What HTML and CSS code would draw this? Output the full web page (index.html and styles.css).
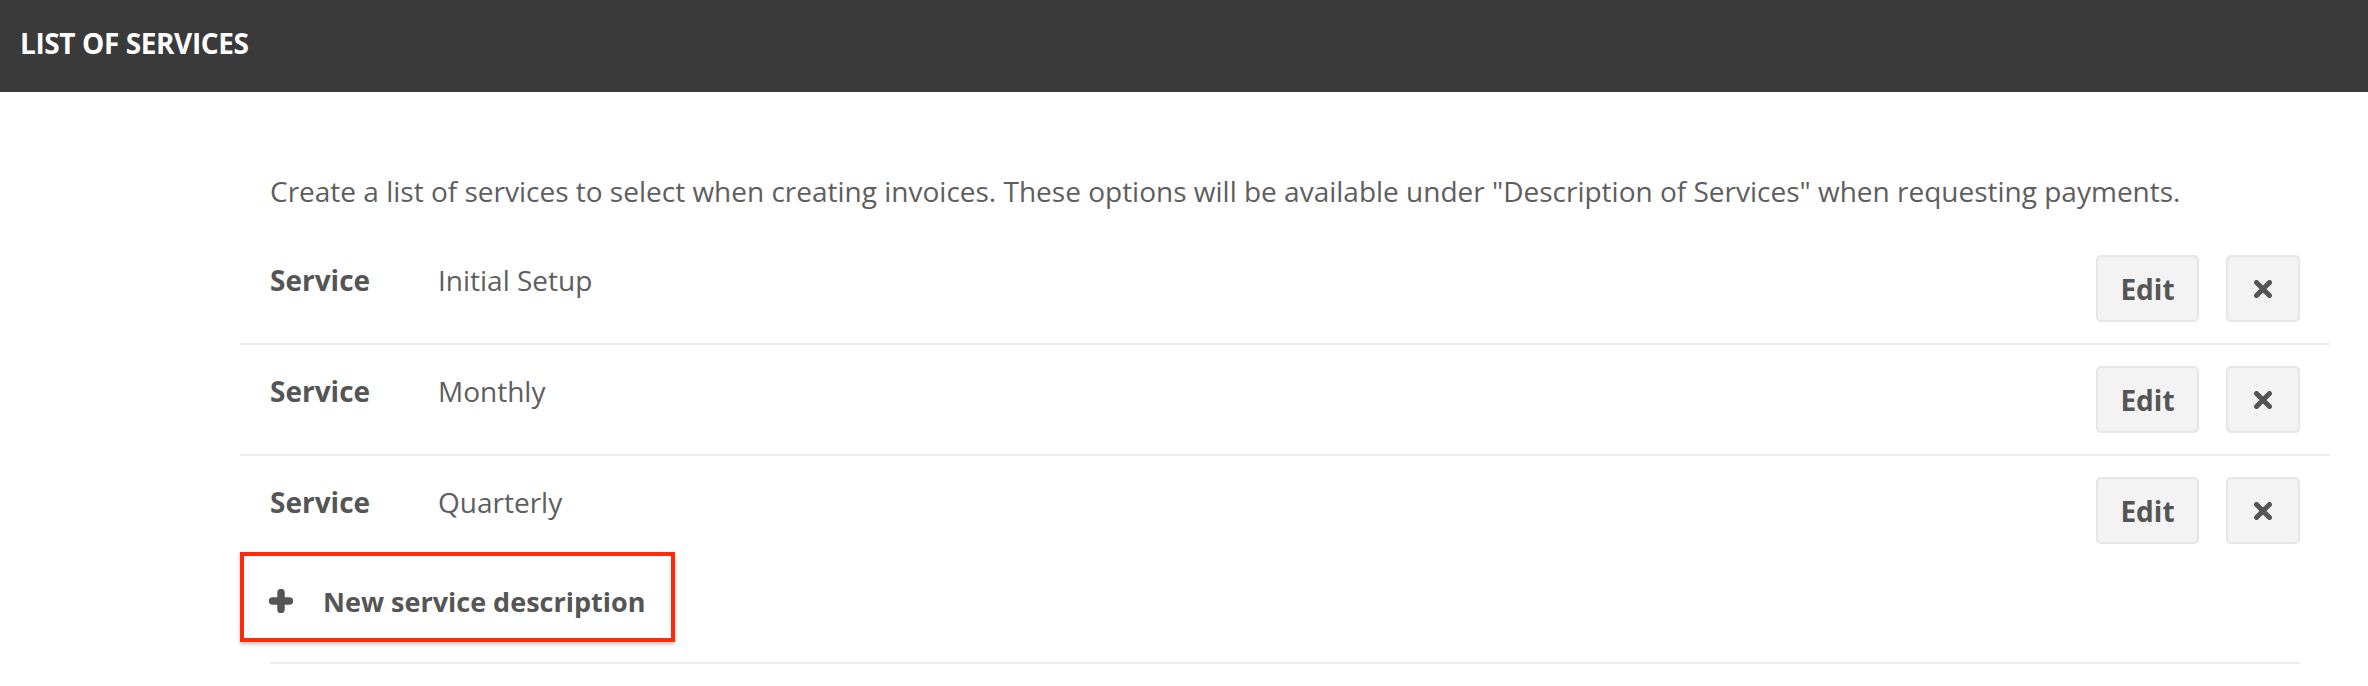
FILE: index.html
```html
<!DOCTYPE html>
<html lang="en">
<head>
<meta charset="utf-8">
<title>List of services</title>
<link rel="stylesheet" href="styles.css">
</head>
<body>
<header class="topbar">
  <h1 class="topbar-title">LIST OF SERVICES</h1>
</header>
<main class="content">
  <p class="intro">Create a list of services to select when creating invoices. These options will be available under "Description of Services" when requesting payments.</p>
  <ul class="service-list">
    <li class="service-row">
      <span class="service-label">Service</span>
      <span class="service-value">Initial Setup</span>
      <div class="service-actions">
        <button class="btn btn-edit" type="button">Edit</button>
        <button class="btn btn-remove" type="button" aria-label="Remove"><svg class="icon-x" viewBox="0 0 20 18" width="20" height="18"><path d="M3.5 2.5 L16.5 15.5 M16.5 2.5 L3.5 15.5" stroke="#555" stroke-width="5" stroke-linecap="round"/></svg></button>
      </div>
    </li>
    <li class="service-row">
      <span class="service-label">Service</span>
      <span class="service-value">Monthly</span>
      <div class="service-actions">
        <button class="btn btn-edit" type="button">Edit</button>
        <button class="btn btn-remove" type="button" aria-label="Remove"><svg class="icon-x" viewBox="0 0 20 18" width="20" height="18"><path d="M3.5 2.5 L16.5 15.5 M16.5 2.5 L3.5 15.5" stroke="#555" stroke-width="5" stroke-linecap="round"/></svg></button>
      </div>
    </li>
    <li class="service-row">
      <span class="service-label">Service</span>
      <span class="service-value">Quarterly</span>
      <div class="service-actions">
        <button class="btn btn-edit" type="button">Edit</button>
        <button class="btn btn-remove" type="button" aria-label="Remove"><svg class="icon-x" viewBox="0 0 20 18" width="20" height="18"><path d="M3.5 2.5 L16.5 15.5 M16.5 2.5 L3.5 15.5" stroke="#555" stroke-width="5" stroke-linecap="round"/></svg></button>
      </div>
    </li>
  </ul>
  <div class="add-wrap">
    <a class="add-link" href="#"><svg class="icon-plus" viewBox="0 0 24 24" width="24" height="24"><path d="M12 3.5 V20.5 M3.5 12 H20.5" stroke="#555" stroke-width="7.5" stroke-linecap="round"/></svg><span>New service description</span></a>
  </div>
  <div class="divider"></div>
</main>
</body>
</html>
```
FILE: styles.css
```css
* { box-sizing: border-box; }
html, body { margin: 0; padding: 0; background: #fff; }
body {
  font-family: "Open Sans", "Liberation Sans", sans-serif;
  color: #5c5c5c;
}
.topbar {
  height: 92px;
  background: #3a3a3a;
  display: flex;
  align-items: center;
  padding-left: 20px;
}
.topbar-title {
  margin: 0;
  padding-bottom: 6px;
  font-size: 28px;
  font-weight: 700;
  color: #fff;
  letter-spacing: -0.4px;
}
.content {
  margin-left: 240px;
  width: 2090px;
}
.intro {
  margin: 77px 0 0;
  padding: 0 30px;
  font-size: 28px;
  line-height: 45px;
  color: #5e5e5e;
}
.service-list {
  list-style: none;
  margin: 20px 0 0;
  padding: 0;
}
.service-row {
  display: flex;
  align-items: flex-start;
  padding: 21px 30px;
  border-bottom: 2px solid #ececec;
}
.service-row:last-child {
  border-bottom: none;
  padding-bottom: 8px;
}
.service-label {
  width: 168px;
  flex: none;
  padding-top: 3px;
  font-size: 28px;
  line-height: 45px;
  font-weight: 700;
  color: #555;
}
.service-value {
  flex: 1;
  padding-top: 3px;
  font-size: 28px;
  line-height: 45px;
  color: #5e5e5e;
}
.service-actions {
  display: flex;
  gap: 27px;
}
.btn {
  height: 67px;
  background: #f3f3f3;
  border: 2px solid #e6e6e6;
  border-radius: 5px;
  font-family: inherit;
  font-size: 28px;
  font-weight: 700;
  color: #555;
  padding: 0;
  display: flex;
  align-items: center;
  justify-content: center;
}
.btn-edit { width: 103px; }
.btn-remove { width: 74px; }
.icon-x { display: block; }
.add-wrap {
  display: flex;
}
.add-link {
  display: flex;
  align-items: center;
  gap: 30px;
  height: 90px;
  padding: 8px 26px 0 25px;
  border: 4px solid #ff2a0a;
  box-shadow: 0 2px 4px rgba(0,0,0,0.25);
  text-decoration: none;
  font-size: 27px;
  font-weight: 700;
  color: #555;
}
.icon-plus { display: block; flex: none; }
.divider {
  margin: 20px 30px 0;
  height: 2px;
  background: #ececec;
}
```
